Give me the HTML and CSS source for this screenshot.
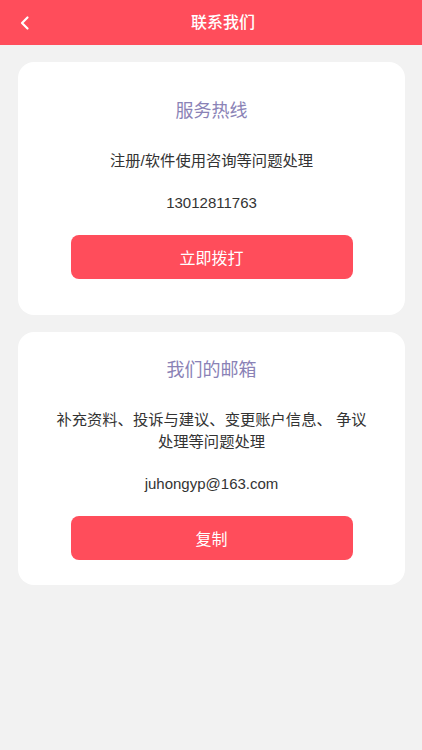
FILE: index.html
```html
<!DOCTYPE html>
<html lang="zh-CN">
<head>
<meta charset="utf-8">
<title>联系我们</title>
<link rel="stylesheet" href="styles.css">
</head>
<body>
<header class="topbar">
  <span class="back">
    <svg width="12" height="16" viewBox="0 0 12 16"><polyline points="8.5,2.5 3,8 8.5,13.5" fill="none" stroke="#fff" stroke-width="2.2" stroke-linecap="round" stroke-linejoin="round"/></svg>
  </span>
  <h1 class="title">联系我们</h1>
</header>
<main class="content">
  <section class="card">
    <h2 class="card-title">服务热线</h2>
    <p class="card-text">注册/软件使用咨询等问题处理</p>
    <p class="card-value">13012811763</p>
    <button class="btn">立即拨打</button>
  </section>
  <section class="card">
    <h2 class="card-title">我们的邮箱</h2>
    <p class="card-text">补充资料、投诉与建议、变更账户信息、 争议处理等问题处理</p>
    <p class="card-value">juhongyp@163.com</p>
    <button class="btn">复制</button>
  </section>
</main>
</body>
</html>
```
FILE: styles.css
```css
* { box-sizing: border-box; }
html, body {
  margin: 0;
  padding: 0;
  background: #f2f2f2;
  font-family: "Liberation Sans", "Noto Sans CJK SC", sans-serif;
  color: #333;
}
body { min-height: 750px; }
.topbar {
  height: 45px;
  background: #ff4d5b;
  display: flex;
  align-items: center;
  justify-content: center;
  position: relative;
}
.back {
  position: absolute;
  left: 19px;
  top: 15px;
  width: 12px;
  height: 16px;
  display: flex;
}
.title {
  margin: 0 0 0 24px;
  font-size: 16px;
  font-weight: 500;
  color: #fff;
  line-height: 22px;
}
.content {
  padding: 17px 17px 0 18px;
  display: flex;
  flex-direction: column;
  gap: 17px;
}
.card {
  height: 253px;
  background: #fff;
  border-radius: 16px;
  display: flex;
  flex-direction: column;
  align-items: center;
  justify-content: center;
  padding: 0 34px;
  text-align: center;
}
.card-title {
  margin: 0;
  font-size: 18px;
  line-height: 24px;
  font-weight: 400;
  color: #8a82b6;
}
.card-text {
  margin: 27px 0 0;
  font-size: 15.3px;
  line-height: 22px;
  color: #333;
}
.card-value {
  margin: 20px 0 0;
  font-size: 15px;
  line-height: 22px;
  color: #333;
}
.btn {
  margin-top: 21px;
  width: 282px;
  height: 44px;
  border: 0;
  border-radius: 8px;
  background: #ff4d5b;
  color: #fff;
  font-family: inherit;
  font-size: 16px;
}
```
